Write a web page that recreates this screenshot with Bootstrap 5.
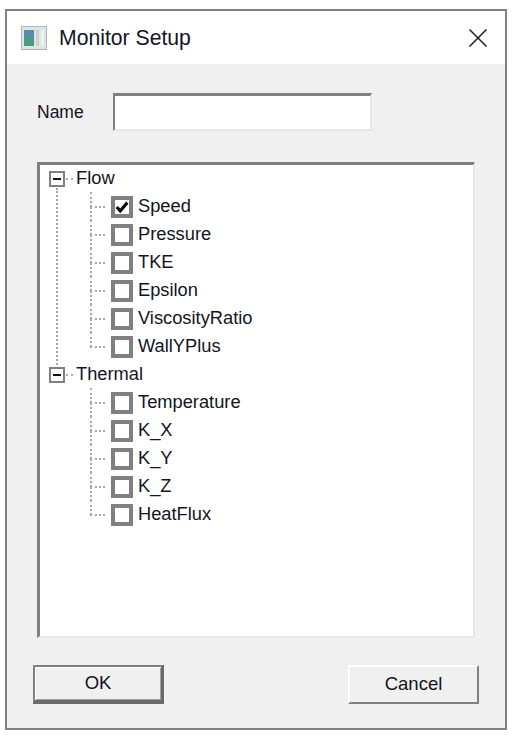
<!DOCTYPE html>
<html lang="en">
<head>
<meta charset="utf-8">
<title>Monitor Setup</title>
<link href="https://cdn.jsdelivr.net/npm/bootstrap@5.3.0/dist/css/bootstrap.min.css" rel="stylesheet">
<style>
html,body{background:#fff;height:100%;overflow:hidden}
body{font-family:"Liberation Sans",Arial,sans-serif;color:#14141e;font-size:18.3px;line-height:1.2;padding:9px 8px 8px 5px}
.dlg{width:502px;height:721px;border:2px solid #808080;background:#f0f0f0}
.dlg-title{height:53px;background:#fff;padding:0 17px 0 14px}
.dlg-title .ttl{font-size:21.2px;margin-left:12px;margin-top:1px}
.closex{margin-left:auto}
.dlg-body{padding:29px 26px 0 26px}
.name-lbl{width:80px;padding-left:4px;font-size:17.5px}
.name-inp{width:259px;height:38px;border-radius:0;border-style:solid;border-width:3px 2px 2px 2px;border-color:#808080 #e6e6e6 #e6e6e6 #808080;background:#fff;padding:0 4px;box-shadow:none}
.treebox{margin:31px 0 0 4px;width:438px;height:476px;background:#fff;border-style:solid;border-width:3px 2px 2px 3px;border-color:#808080 #e6e6e6 #e6e6e6 #808080;overflow:hidden}
.rowx{height:28px;position:relative}
.rowx>span:last-child{margin-bottom:2px}
.top-node{padding-left:9px}
.expbox{width:16px;height:16px;border:2px solid #808080;background:#fff;display:flex;align-items:center;justify-content:center;flex:none}
.expbox i{display:block;width:8px;height:2px;background:#111}
.dots-s{width:7px;border-top:2px dotted #a8a8a8;margin:0 3px 0 1px;flex:none}
.child{padding-left:71px}
.child::before{content:"";position:absolute;left:50px;top:-1px;height:15px;border-left:2px dotted #a8a8a8}
.dots-l{width:15px;border-top:2px dotted #a8a8a8;margin-left:-21px;margin-right:6px;flex:none}
.cbx{width:22px;height:22px;border:4px solid #808080;background:#fff;flex:none;margin-right:5px;display:flex;align-items:center;justify-content:center}
.child.mid::after{content:"";position:absolute;left:50px;top:14px;height:14px;border-left:2px dotted #a8a8a8}
.trunk{position:relative}
.trunk::before{content:"";position:absolute;left:16px;top:23px;bottom:-4px;border-left:2px dotted #a8a8a8;z-index:1}
.dlg-foot{padding:27px 0 0 0}
.wbtn{width:131px;height:39px;border-radius:0;background:#f0f0f0;color:#14141e;font-size:18.5px;padding:0 0 2px;border-style:solid}
.wbtn:hover{background:#f0f0f0;color:#14141e}
.wbtn-def{border-width:2px 3px 4px 2px;border-color:#808080 #6a6a6a #6a6a6a #808080;box-shadow:inset 1px 1px 0 #fff,inset -1px -1px 0 #a0a0a0}
.wbtn-norm{border-width:2px;border-color:#fff #808080 #808080 #fff}
</style>
</head>
<body>
<div class="dlg d-flex flex-column">
  <div class="dlg-title d-flex align-items-center">
    <svg width="26" height="24" viewBox="0 0 26 24" aria-hidden="true"><rect x="0.5" y="0.5" width="25" height="23" fill="#dfe3e3" stroke="#b4b4b4"/><rect x="3" y="4" width="10" height="16" fill="#4c9a86"/><rect x="3" y="4" width="10" height="7" fill="#5a8aa6"/><rect x="15" y="4" width="3" height="16" fill="#c9d0d0"/><rect x="20" y="4" width="3" height="16" fill="#eef1f1"/></svg>
    <span class="ttl">Monitor Setup</span>
    <svg class="closex" width="20" height="20" viewBox="0 0 20 20" aria-hidden="true"><path d="M1.5 1.5 18.5 18.5M18.5 1.5 1.5 18.5" stroke="#222" stroke-width="1.6" fill="none"/></svg>
  </div>
  <div class="dlg-body flex-grow-1">
    <div class="d-flex align-items-center">
      <label class="name-lbl" for="nm">Name</label>
      <input id="nm" class="form-control name-inp" type="text">
    </div>
    <div class="treebox">
      <div class="trunk">
        <div class="rowx top-node d-flex align-items-center"><span class="expbox"><i></i></span><span class="dots-s"></span><span>Flow</span></div>
        <div class="rowx child mid d-flex align-items-center"><span class="dots-l"></span><span class="cbx"><svg width="16" height="14" viewBox="0 0 16 14" aria-hidden="true"><path d="M2 7 6 11.5 14 2" fill="none" stroke="#000" stroke-width="3.6"/></svg></span><span>Speed</span></div>
        <div class="rowx child mid d-flex align-items-center"><span class="dots-l"></span><span class="cbx"></span><span>Pressure</span></div>
        <div class="rowx child mid d-flex align-items-center"><span class="dots-l"></span><span class="cbx"></span><span>TKE</span></div>
        <div class="rowx child mid d-flex align-items-center"><span class="dots-l"></span><span class="cbx"></span><span>Epsilon</span></div>
        <div class="rowx child mid d-flex align-items-center"><span class="dots-l"></span><span class="cbx"></span><span>ViscosityRatio</span></div>
        <div class="rowx child d-flex align-items-center"><span class="dots-l"></span><span class="cbx"></span><span>WallYPlus</span></div>
      </div>
      <div class="rowx top-node d-flex align-items-center"><span class="expbox"><i></i></span><span class="dots-s"></span><span>Thermal</span></div>
      <div class="rowx child mid d-flex align-items-center"><span class="dots-l"></span><span class="cbx"></span><span>Temperature</span></div>
      <div class="rowx child mid d-flex align-items-center"><span class="dots-l"></span><span class="cbx"></span><span>K_X</span></div>
      <div class="rowx child mid d-flex align-items-center"><span class="dots-l"></span><span class="cbx"></span><span>K_Y</span></div>
      <div class="rowx child mid d-flex align-items-center"><span class="dots-l"></span><span class="cbx"></span><span>K_Z</span></div>
      <div class="rowx child d-flex align-items-center"><span class="dots-l"></span><span class="cbx"></span><span>HeatFlux</span></div>
    </div>
    <div class="dlg-foot d-flex justify-content-between">
      <button type="button" class="btn wbtn wbtn-def">OK</button>
      <button type="button" class="btn wbtn wbtn-norm">Cancel</button>
    </div>
  </div>
</div>
<script src="https://cdn.jsdelivr.net/npm/bootstrap@5.3.0/dist/js/bootstrap.bundle.min.js"></script>
</body>
</html>
